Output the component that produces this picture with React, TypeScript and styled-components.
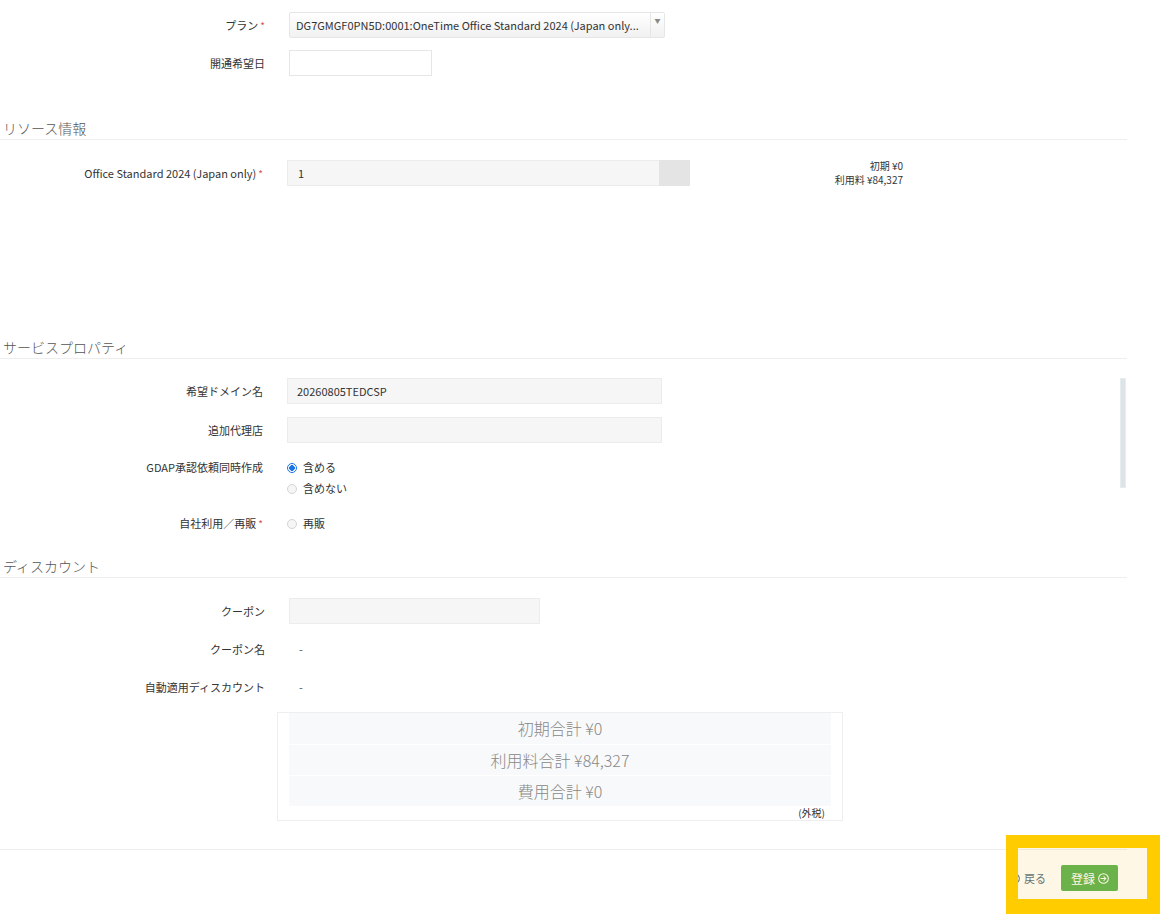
import React from 'react';
import styled, { createGlobalStyle } from 'styled-components';

const GlobalStyle = createGlobalStyle`
  html, body { margin: 0; padding: 0; background: #fff; overflow: hidden; }
  body {
    font-family: "Noto Sans CJK JP", "Noto Sans", sans-serif;
    font-weight: 400;
    color: #333;
  }
  * { box-sizing: border-box; }
`;

const Screen = styled.div`
  position: relative;
  width: 1162px;
  height: 914px;
  overflow: hidden;
`;

const Page = styled.div`
  width: 1127px;
  padding-top: 12px;
`;

const Section = styled.section`
  position: relative;
`;

const SectionTitle = styled.h2<{ $top: number }>`
  margin: ${p => p.$top}px 0 0;
  padding: 0 0 1px 3px;
  font-size: 14px;
  line-height: 20px;
  font-weight: 300;
  color: #555;
  border-bottom: 1px solid #eee;
`;

const Fields = styled.div<{ $gap: number; $pad?: number; $minHeight?: number }>`
  display: flex;
  flex-direction: column;
  gap: ${p => p.$gap}px;
  padding-top: ${p => p.$pad ?? 0}px;
  min-height: ${p => (p.$minHeight ? `${p.$minHeight}px` : 'auto')};
`;

const Row = styled.div<{ $label: number; $radio?: boolean }>`
  display: grid;
  grid-template-columns: ${p => p.$label}px 1fr;
  column-gap: 24px;
  align-items: ${p => (p.$radio ? 'start' : 'center')};
  min-height: ${p => (p.$radio ? 21 : 26)}px;
  margin-top: ${p => (p.$radio ? 1 : 0)}px;
`;

const Label = styled.label`
  font-size: 11px;
  line-height: 21px;
  text-align: right;
  white-space: nowrap;
  color: #333;
`;

const Req = styled.span`
  color: #d9534f;
  font-size: 10px;
  margin-left: 2px;
`;

const Select = styled.div`
  display: flex;
  align-items: center;
  width: 376px;
  height: 26px;
  border: 1px solid #e6e6e6;
  border-radius: 2px;
  background: linear-gradient(#ffffff, #f1f1f1);
  font-size: 11px;
  color: #333;
  white-space: nowrap;
  overflow: hidden;
`;

const SelectValue = styled.span`
  flex: 1;
  padding-left: 6px;
  overflow: hidden;
`;

const SelectArrow = styled.span`
  width: 14px;
  align-self: stretch;
  border-left: 1px solid #e6e6e6;
  display: flex;
  justify-content: center;
  padding-top: 3px;
  font-size: 6px;
  color: #888;
`;

const Input = styled.div<{ $w: number; $readonly?: boolean }>`
  width: ${p => p.$w}px;
  height: 26px;
  border: 1px solid ${p => (p.$readonly ? '#ececec' : '#e6e6e6')};
  background: ${p => (p.$readonly ? '#f6f6f6' : '#fff')};
  padding-left: 9px;
  font-size: 11px;
  line-height: 24px;
  color: #333;
`;

const InputGroup = styled.div`
  display: flex;
  width: 403px;
  height: 26px;
`;

const GroupField = styled.div`
  flex: 1;
  border: 1px solid #ececec;
  border-right: none;
  background: #f6f6f6;
  padding-left: 10px;
  font-size: 11px;
  line-height: 24px;
`;

const GroupAddon = styled.div`
  width: 31px;
  background: #e4e4e4;
`;

const Control = styled.div`
  display: flex;
  align-items: center;
`;

const PriceNote = styled.div`
  width: 213px;
  text-align: right;
  font-size: 10px;
  line-height: 14px;
  color: #333;
`;

const RadioGroup = styled.div`
  display: flex;
  flex-direction: column;
`;

const RadioOption = styled.div`
  display: flex;
  align-items: center;
  gap: 6px;
  font-size: 11px;
  line-height: 21px;
`;

const RadioDot = styled.span<{ $on?: boolean }>`
  width: 10px;
  height: 10px;
  border-radius: 50%;
  border: 1px solid ${p => (p.$on ? '#1a73e8' : '#d4d4d4')};
  background: ${p => (p.$on ? 'radial-gradient(circle, #1a73e8 0 2.6px, #fff 3px)' : '#f6f6f6')};
`;

const Value = styled.div`
  padding-left: 10px;
  font-size: 11px;
  color: #555;
`;

const ScrollThumb = styled.div`
  position: absolute;
  top: 41px;
  right: 1px;
  width: 6px;
  height: 110px;
  background: #dde3e8;
  border: 1px solid #e7ecef;
`;

const Totals = styled.div`
  margin-left: 277px;
  width: 566px;
  border: 1px solid #eee;
  padding: 0 11px;
`;

const TotalRow = styled.div`
  height: 31px;
  line-height: 31px;
  text-align: center;
  font-size: 16px;
  font-weight: 300;
  color: #888;
  background: #f8f9fa;
  & + & { border-top: 1px solid #fff; }
`;

const TaxNote = styled.div`
  text-align: right;
  padding-right: 6px;
  font-size: 10px;
  line-height: 14px;
  color: #333;
`;

const Footer = styled.footer`
  margin-top: 28px;
  border-top: 1px solid #eee;
  padding: 15px 9px 0 0;
  display: flex;
  justify-content: flex-end;
  align-items: center;
  gap: 15px;
`;

const BackLink = styled.a`
  display: inline-flex;
  align-items: center;
  gap: 4px;
  font-size: 11px;
  color: #4d6b80;
  text-decoration: none;
`;

const SubmitButton = styled.button`
  display: inline-flex;
  align-items: center;
  gap: 3px;
  height: 26px;
  padding: 0 9px 0 10px;
  border: none;
  border-radius: 2px;
  background: #58b04d;
  color: #fff;
  font-family: inherit;
  font-weight: 400;
  font-size: 12px;
`;

const Highlight = styled.div`
  position: absolute;
  left: 1006px;
  top: 835px;
  width: 154px;
  height: 79px;
  border-style: solid;
  border-color: #ffcc00;
  border-width: 13px 13px 15px 12px;
  background: rgba(245, 190, 60, 0.13);
  pointer-events: none;
`;

const CircleArrow = ({ dir, color }: { dir: 'left' | 'right'; color: string }) => (
  <svg width="11" height="11" viewBox="0 0 12 12" fill="none" stroke={color} strokeWidth="1.1">
    <circle cx="6" cy="6" r="5.3" />
    {dir === 'right' ? (
      <path d="M3.2 6h5.4M6.4 3.8 8.6 6 6.4 8.2" strokeLinecap="round" strokeLinejoin="round" />
    ) : (
      <path d="M8.8 6H3.4M5.6 3.8 3.4 6l2.2 2.2" strokeLinecap="round" strokeLinejoin="round" />
    )}
  </svg>
);

export default function App() {
  return (
    <Screen>
      <GlobalStyle />
      <Page>
        <Fields $gap={12}>
          <Row $label={265}>
            <Label>プラン<Req>*</Req></Label>
            <Select>
              <SelectValue>DG7GMGF0PN5D:0001:OneTime Office Standard 2024 (Japan only...</SelectValue>
              <SelectArrow>▼</SelectArrow>
            </Select>
          </Row>
          <Row $label={265}>
            <Label>開通希望日</Label>
            <Input $w={143} />
          </Row>
        </Fields>

        <Section>
          <SectionTitle $top={42}>リソース情報</SectionTitle>
          <Fields $gap={12} $pad={19} $minHeight={197}>
            <Row $label={263}>
              <Label>Office Standard 2024 (Japan only)<Req>*</Req></Label>
              <Control>
                <InputGroup>
                  <GroupField>1</GroupField>
                  <GroupAddon />
                </InputGroup>
                <PriceNote>
                  初期 ¥0<br />利用料 ¥84,327
                </PriceNote>
              </Control>
            </Row>
          </Fields>
        </Section>

        <Section>
          <SectionTitle $top={0}>サービスプロパティ</SectionTitle>
          <Fields $gap={13} $pad={19}>
            <Row $label={263}>
              <Label>希望ドメイン名</Label>
              <Input $w={375} $readonly>20260805TEDCSP</Input>
            </Row>
            <Row $label={263}>
              <Label>追加代理店</Label>
              <Input $w={375} $readonly />
            </Row>
            <Row $label={263} $radio>
              <Label>GDAP承認依頼同時作成</Label>
              <RadioGroup>
                <RadioOption><RadioDot $on />含める</RadioOption>
                <RadioOption><RadioDot />含めない</RadioOption>
              </RadioGroup>
            </Row>
            <Row $label={263} $radio>
              <Label>自社利用／再販<Req>*</Req></Label>
              <RadioGroup>
                <RadioOption><RadioDot />再販</RadioOption>
              </RadioGroup>
            </Row>
          </Fields>
          <ScrollThumb />
        </Section>

        <Section>
          <SectionTitle $top={22}>ディスカウント</SectionTitle>
          <Fields $gap={12} $pad={20}>
            <Row $label={265}>
              <Label>クーポン</Label>
              <Input $w={251} $readonly />
            </Row>
            <Row $label={265}>
              <Label>クーポン名</Label>
              <Value>-</Value>
            </Row>
            <Row $label={265}>
              <Label>自動適用ディスカウント</Label>
              <Value>-</Value>
            </Row>
            <Totals>
              <TotalRow>初期合計 ¥0</TotalRow>
              <TotalRow>利用料合計 ¥84,327</TotalRow>
              <TotalRow>費用合計 ¥0</TotalRow>
              <TaxNote>(外税)</TaxNote>
            </Totals>
          </Fields>
        </Section>

        <Footer>
          <BackLink href="#">
            <CircleArrow dir="left" color="#4d6b80" />
            戻る
          </BackLink>
          <SubmitButton type="button">
            登録
            <CircleArrow dir="right" color="#fff" />
          </SubmitButton>
        </Footer>
      </Page>
      <Highlight />
    </Screen>
  );
}
